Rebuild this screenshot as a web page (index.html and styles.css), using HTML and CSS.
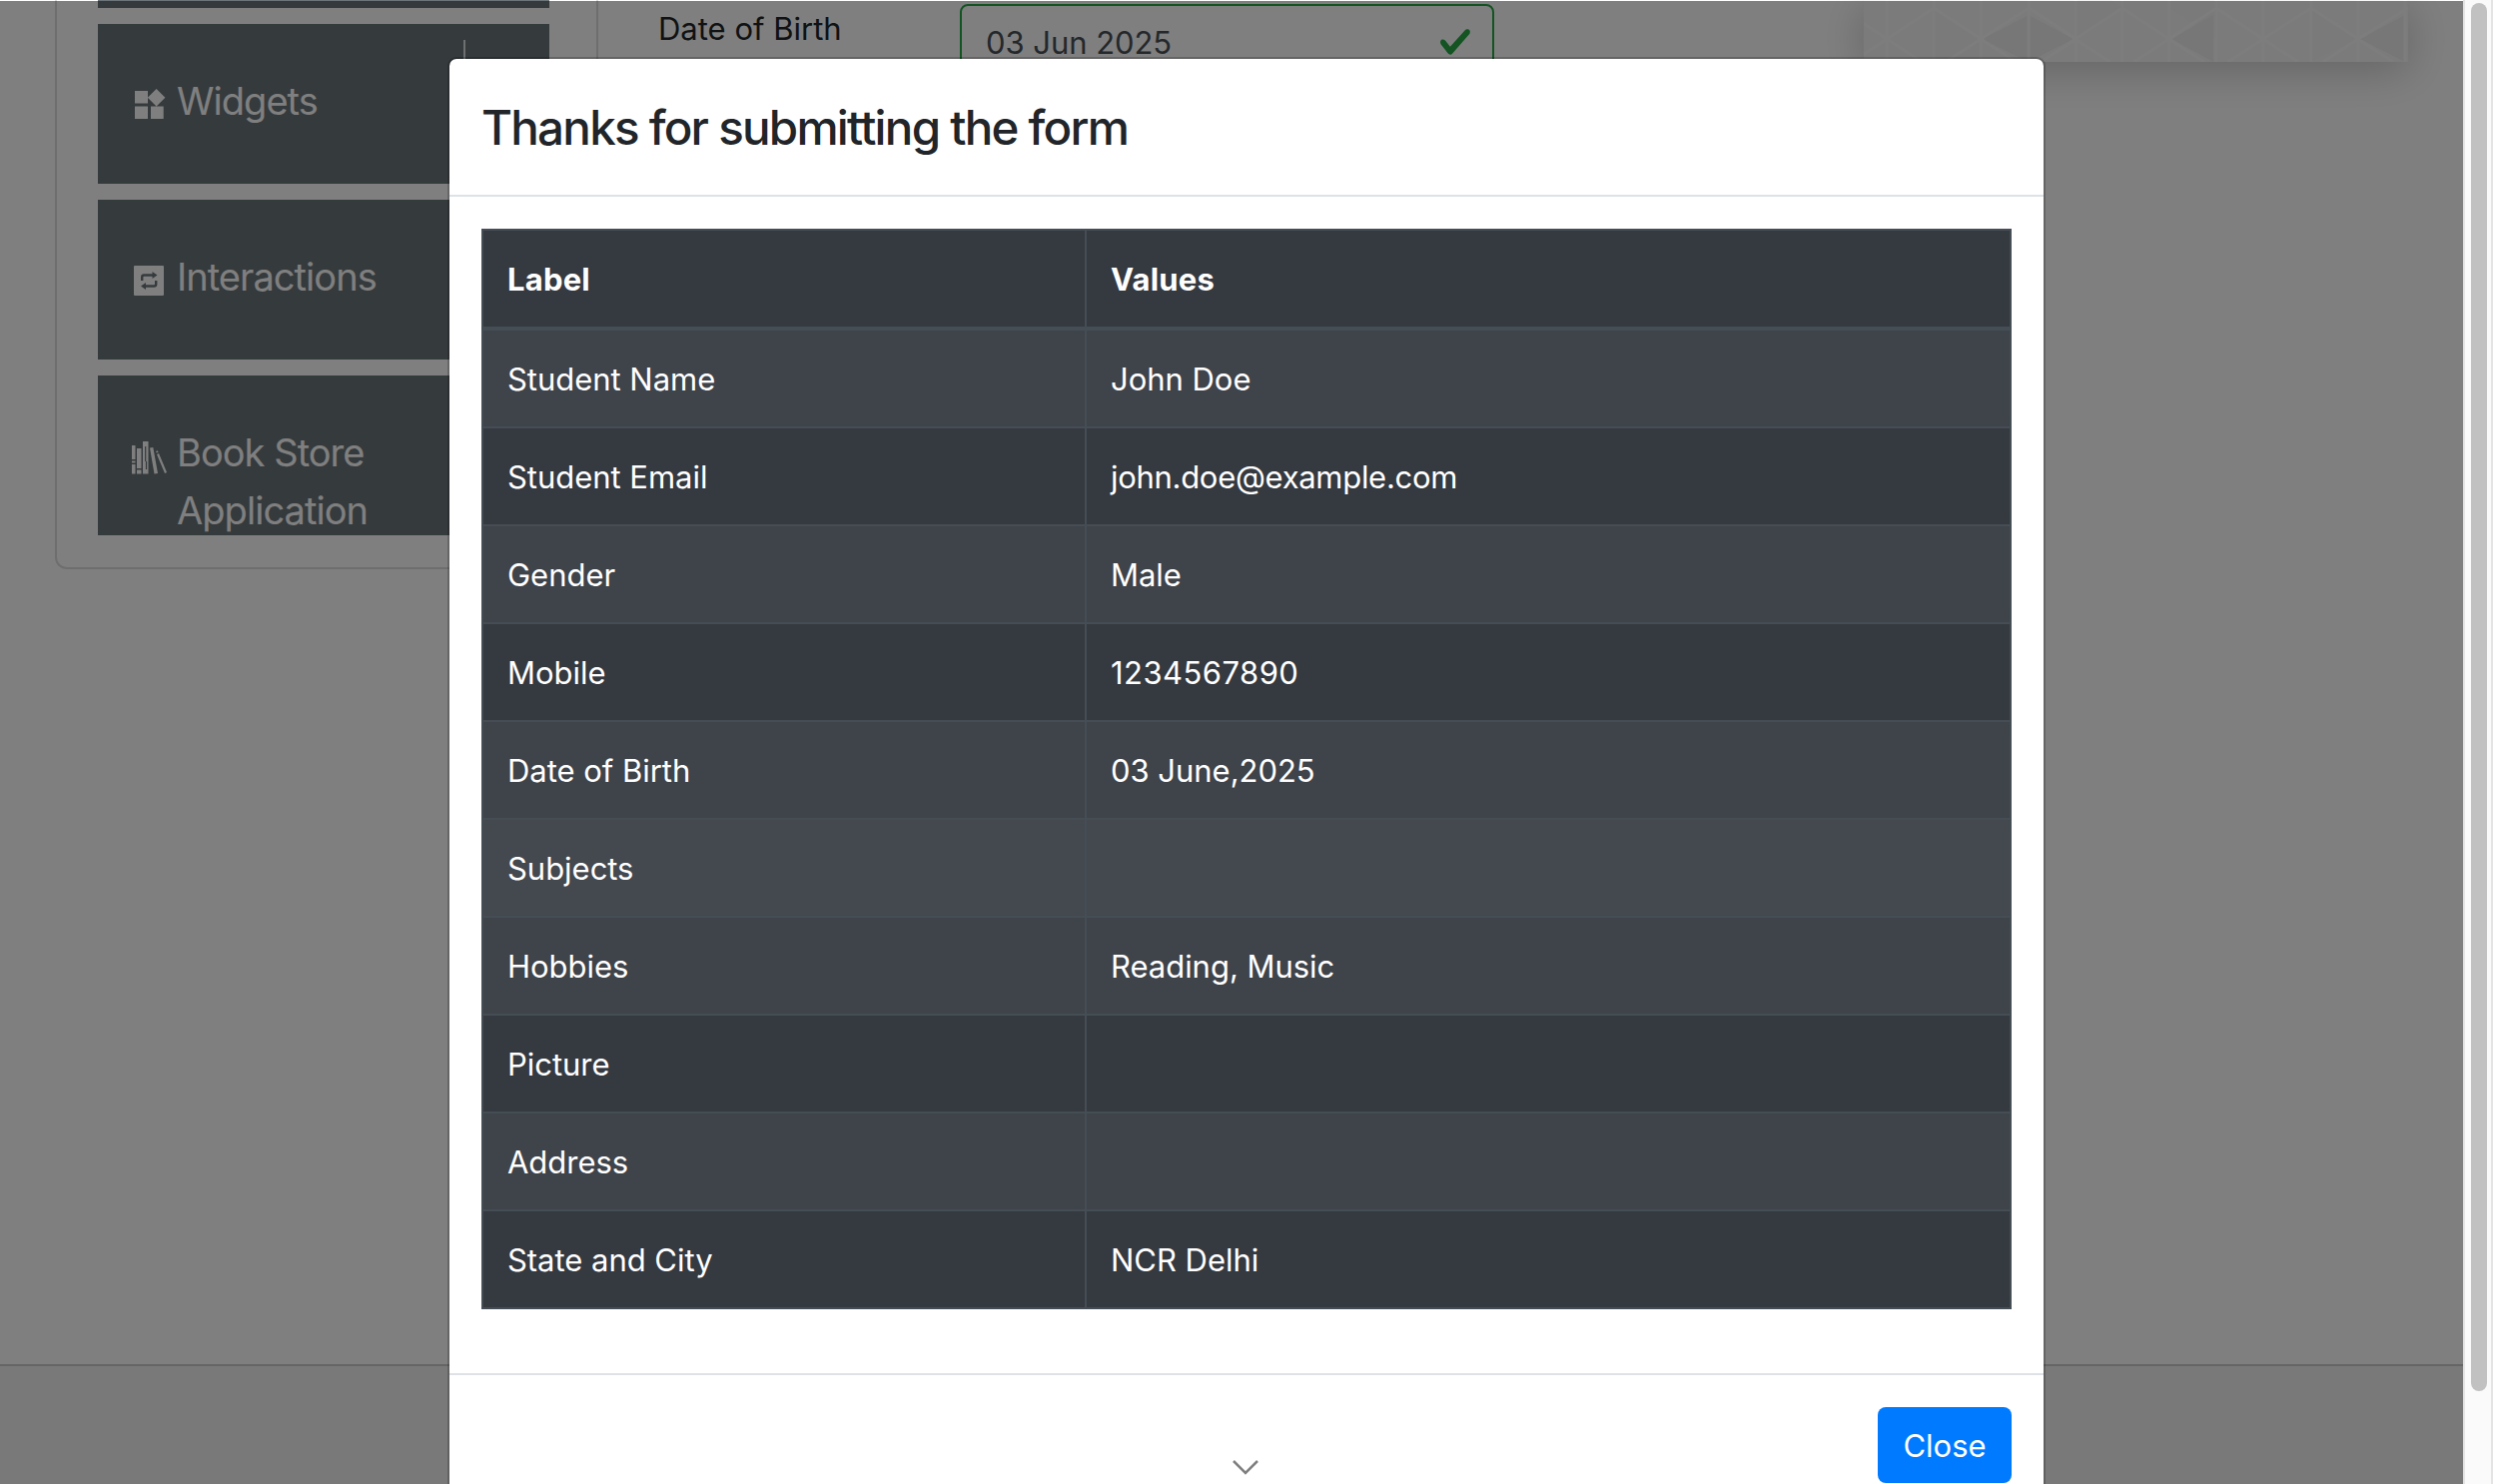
FILE: index.html
```html
<!DOCTYPE html>
<html lang="en">
<head>
<meta charset="utf-8">
<title>Practice Form</title>
<link rel="stylesheet" href="styles.css">
</head>
<body>
<div class="page">
  <div class="columns">
    <nav class="sidebar">
      <div class="menu-item menu-item-cut"></div>
      <div class="menu-item">
        <svg class="menu-icon" viewBox="0 0 40 40"><path d="M5 6h13v12.500H5zM5 21.500h13V34H5zM21 21.500h12.700V34H21zM26.600 3.900l8.800 8.800-8.800 8.800-8.800-8.800z"/></svg>
        <span class="menu-text">Widgets</span>
      </div>
      <div class="menu-item">
        <svg class="menu-icon" viewBox="0 0 40 40"><path d="M5 5h28a1 1 0 0 1 1 1v28a1 1 0 0 1-1 1H5a1 1 0 0 1-1-1V6a1 1 0 0 1 1-1z"/><path class="menu-icon-cut" d="M12.200 20v-3.500q0-2 2-2H24M26.200 20v3.500q0 2-2 2H14"/><path class="menu-icon-hole" d="M22.500 11l5 3.500-5 3.500zM16 22l-5 3.500 5 3.500z"/></svg>
        <span class="menu-text">Interactions</span>
      </div>
      <div class="menu-item">
        <svg class="menu-icon" viewBox="0 0 40 40"><g transform="translate(0 3)"><path d="M2 6h3.500v14H2zM2 21.500h3.500v2H2zM2 25h3.500v9.500H2zM7 9h4.500v20H7zM7 30.500h4.500v4H7zM13 2h5.500v32.500H13zM20 8.500l3.300-.6L28 34l-3.500.5zM26 12l1.800-.8.8 1.500-1.800.8zM27 15l2-1L37 33l-2 1z"/><path class="menu-icon-slit" d="M15.700 7v15M16.500 22v8"/></g></svg>
        <span class="menu-text">Book Store Application</span>
      </div>
    </nav>
    <main class="form-pane">
      <span class="form-label">Date of Birth</span>
      <div class="form-input">
        <span>03 Jun 2025</span>
        <svg class="valid-icon" viewBox="0 0 8 8"><path d="M2.300 6.730L.6 4.530c-.4-1.040.46-1.400 1.100-.8l1.100 1.400 3.400-3.800c.6-.63 1.600-.27 1.200.7l-4 4.600c-.43.5-.8.4-1.100.1z"/></svg>
      </div>
    </main>
    <aside class="ad">
      <svg class="ad-art" viewBox="0 0 545 62" preserveAspectRatio="none">
        <path class="tri-mid" d="M70 8L117 39V62H70zM165 17L117 39 165 62zM212 0V41L259 8 248 0zM306 8L353 39V0H306zM448 8L495 39 448 62z"/>
        <path class="tri-dark" d="M165 15L119 39 165 62zM165 15L210 39 165 62zM350 15L308 39 350 62zM542 15L497 39 542 62z"/>
        <path class="tri-line" d="M-24 8L23 39 70 8 117 39 165 8 212 39 259 8 306 39 353 8 400 39 448 8 495 39 545 8M23 39L-12 62M23 39L58 62M117 39L82 62M117 39L152 62M212 39L177 62M212 39L247 62M306 39L271 62M306 39L341 62M400 39L365 62M400 39L435 62M495 39L460 62M495 39L530 62M23 0V62M70 0V62M117 0V62M165 0V62M212 0V62M259 0V62M306 0V62M353 0V62M400 0V62M448 0V62M495 0V62M542 0V62"/>
      </svg>
    </aside>
  </div>
  <footer class="page-footer"></footer>
</div>
<div class="backdrop"></div>
<div class="divider-mark"></div>
<section class="modal">
  <header class="modal-header"><h4 class="modal-title">Thanks for submitting the form</h4></header>
  <div class="modal-body">
    <table class="result">
      <thead><tr><th>Label</th><th>Values</th></tr></thead>
      <tbody>
        <tr><td>Student Name</td><td>John Doe</td></tr>
        <tr><td>Student Email</td><td class="email">john.doe@example.com</td></tr>
        <tr><td>Gender</td><td>Male</td></tr>
        <tr><td>Mobile</td><td class="number">1234567890</td></tr>
        <tr><td>Date of Birth</td><td>03 June,2025</td></tr>
        <tr class="hovered"><td>Subjects</td><td></td></tr>
        <tr><td>Hobbies</td><td>Reading, Music</td></tr>
        <tr><td>Picture</td><td></td></tr>
        <tr><td>Address</td><td></td></tr>
        <tr><td>State and City</td><td>NCR Delhi</td></tr>
      </tbody>
    </table>
  </div>
  <footer class="modal-footer"><button class="close-btn">Close</button></footer>
</section>
<svg class="chevron" viewBox="0 0 28 18"><path d="M2 3l12 12L26 3"/></svg>
<div class="scrollbar"><div class="thumb"></div></div>
</body>
</html>
```
FILE: styles.css
```css
* { box-sizing: border-box; }
html, body { height: 100%; }
body {
  margin: 0;
  overflow: hidden;
  background: #fff;
  color: #212529;
  font: 400 31px/48px Inter, "Liberation Sans", sans-serif;
}
.page { display: flex; flex-direction: column; height: 1486px; width: 2466px; }
.columns { flex: 1; display: flex; align-items: flex-start; }
.sidebar {
  width: 541px;
  height: 570px;
  margin-left: 55px;
  padding: 0 0 0 41px;
  border: solid #dcdcdc;
  border-width: 0 0 2px 2px;
  border-radius: 0 0 0 12px;
  display: flex;
  flex-direction: column;
  gap: 16px;
}
.menu-item {
  width: 452px;
  height: 160px;
  padding: 48px 130px 0 32px;
  background: #6b757a;
  color: #fff;
  display: flex;
  gap: 7px;
  overflow: hidden;
  font-size: 38px;
  line-height: 58px;
  letter-spacing: -.95px;
}
.menu-item-cut { height: 8px; padding: 0; }
.menu-icon { flex: none; width: 40px; height: 40px; margin-top: 13px; fill: #fff; }
.menu-icon-cut { fill: none; stroke: #6b757a; stroke-width: 2.4; }
.menu-icon-slit { fill: none; stroke: #6b757a; stroke-width: 1.2; }
.menu-icon-hole { fill: #6b757a; }
.form-pane {
  height: 60px;
  margin-left: 1px;
  padding: 4px 0 0 60px;
  border-left: 2px solid #dcdcdc;
  width: 1269px;
  display: flex;
}
.form-label { width: 302px; padding-top: 1px; }
.form-input {
  width: 535px;
  height: 76px;
  padding: 13px 20px 0 24px;
  border: 2px solid #28a745;
  border-radius: 8px;
  color: #495057;
  letter-spacing: -.05px;
  display: flex;
  justify-content: space-between;
}
.valid-icon { width: 34px; height: 34px; margin-top: 6px; fill: #28a745; }
.ad { width: 545px; height: 62px; background: #f7f7f7; box-shadow: 0 8px 44px rgba(0, 0, 0, .22); }
.ad-art { display: block; width: 545px; height: 62px; }
.tri-mid { fill: #f4f4f4; }
.tri-dark { fill: #eee; }
.tri-line { fill: none; stroke: #fafafa; stroke-width: 3; }
.page-footer { height: 120px; border-top: 2px solid #cacaca; background: #f2f2f2; }
.backdrop { position: absolute; inset: 1px 30px 0 0; background: rgba(0, 0, 0, .503); }
.divider-mark { position: absolute; left: 464px; top: 40px; width: 2px; height: 20px; background: #6e7072; }
.modal {
  position: absolute;
  left: 448px;
  top: 57px;
  width: 1600px;
  height: 1500px;
  border: 2px solid rgba(0, 0, 0, .2);
  border-radius: 9px;
  background: #fff;
  background-clip: padding-box;
}
.modal-header { height: 138px; padding: 33px 32px 0; border-bottom: 2px solid #dee2e6; }
.modal-title { margin: 0; font-size: 47.5px; font-weight: 500; line-height: 72px; letter-spacing: -1.75px; }
.modal-body { height: 1178px; padding: 32px; }
.result {
  width: 1532px;
  border-collapse: collapse;
  table-layout: fixed;
  background: #353940;
  color: #fff;
}
.result th, .result td {
  height: 98px;
  padding: 25px 24px 23px;
  border: 2px solid #454d55;
  text-align: left;
  line-height: 48px;
}
.result td { letter-spacing: -.03px; }
.result th:first-child { width: 604px; }
.result th { border-bottom-width: 4px; font-weight: 700; letter-spacing: .2px; }
.result tbody tr:nth-child(odd) { background: #3f434a; }
.result .hovered { background: #44484f; }
.result .email { letter-spacing: -.3px; }
.result .number { letter-spacing: .45px; }
.modal-footer { display: flex; justify-content: flex-end; padding: 32px; border-top: 2px solid #dee2e6; }
.close-btn {
  width: 134px;
  height: 76px;
  padding: 1px 0 0;
  border: 0;
  border-radius: 8px;
  background: #007bff;
  color: #fff;
  font: inherit;
}
.chevron { position: absolute; left: 1233px; top: 1460px; width: 28px; height: 18px; fill: none; stroke: #808080; stroke-width: 2.5; }
.scrollbar {
  position: absolute;
  top: 0;
  right: 0;
  width: 30px;
  height: 1486px;
  padding: 3px 0 0 6px;
  border: solid #e4e4e4;
  border-width: 0 2px;
  background: #fafafa;
}
.thumb { width: 16px; height: 1390px; border-radius: 8px; background: #c1c1c1; }
```
